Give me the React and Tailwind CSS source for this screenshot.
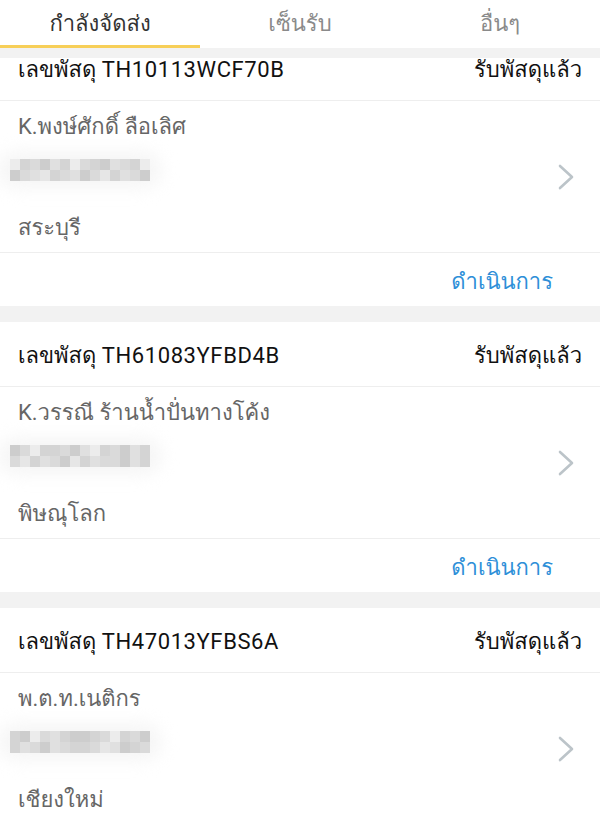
const font = {
  fontFamily: 'Roboto, Loma, Garuda, "Noto Sans Thai Looped", "Noto Sans", "Noto Sans Thai", "Liberation Sans", sans-serif',
};

const parcels = [
  { id: "TH10113WCF70B", name: "K.พงษ์ศักดิ์ ลือเลิศ", city: "สระบุรี", blur: [5, 3, 2, 4, 1, 3, 5, 2, 3, 4, 1, 2, 3, 5] },
  { id: "TH61083YFBD4B", name: "K.วรรณี ร้านน้ำปั่นทางโค้ง", city: "พิษณุโลก", blur: [4, 2, 5, 3, 3, 2, 4, 1, 5, 3, 2, 4, 1, 3] },
  { id: "TH47013YFBS6A", name: "พ.ต.ท.เนติกร", city: "เชียงใหม่", blur: [3, 4, 5, 2, 1, 3, 4, 4, 3, 2, 5, 3, 2, 4] },
];

const shades = ["#ececec", "#e6e6e6", "#e0e0e0", "#dadada", "#d4d4d4", "#cdcdcd"];

const Blurred = ({ seed }) => (
  <div className="relative h-[22px] w-[140px]">
    <div className="absolute -inset-x-3 -inset-y-2 rounded-full bg-[#f6f6f6] blur-sm" />
    <div className="relative grid h-full grid-cols-[repeat(14,10px)] grid-rows-2 blur-[0.5px]">
      {seed.concat(seed.slice().reverse()).map((s, i) => (
        <div key={i} style={{ backgroundColor: shades[(s + (i < 14 ? 1 : 0)) % 6] }} />
      ))}
    </div>
  </div>
);

const Chevron = () => (
  <svg width="18" height="28" viewBox="0 0 18 28" className="mr-[25px]">
    <polyline points="3,3 15,14 3,25" fill="none" stroke="#bcc4c9" strokeWidth="2.6" strokeLinecap="round" strokeLinejoin="round" />
  </svg>
);

const Card = ({ p, first }) => (
  <div className={`bg-white ${first ? "-mt-[22px]" : "mt-4"}`}>
    <div className="flex h-[65px] items-center justify-between border-b border-[#eeeeee] px-[18px] pt-[3px] text-[22px] text-[#111]">
      <span>
        เลขพัสดุ <span className="tracking-[0.6px]">{p.id}</span>
      </span>
      <span>รับพัสดุแล้ว</span>
    </div>
    <div className="flex h-[152px] items-center border-b border-[#eeeeee]">
      <div className="flex h-full flex-1 flex-col pl-[18px] text-[22px] leading-[28px] text-[#666]">
        <span className="mt-[12px]">{p.name}</span>
        <div className="-ml-2 mt-[18px]">
          <Blurred seed={p.blur} />
        </div>
        <span className="mt-[33px]">{p.city}</span>
      </div>
      <Chevron />
    </div>
    <div className="flex h-[53px] items-center justify-end pr-[47px] pt-[4px] text-[22px] text-[#2e8fd8]">ดำเนินการ</div>
  </div>
);

export default function App() {
  return (
    <div className="h-[824px] w-[600px] overflow-hidden bg-[#f2f2f2]" style={font}>
      <div className="flex h-[48px] bg-white">
        {["กำลังจัดส่ง", "เซ็นรับ", "อื่นๆ"].map((t, i) => (
          <div
            key={t}
            className={`flex flex-1 items-center justify-center border-b-[3px] pt-[1px] text-[22px] ${
              i === 0 ? "border-[#f7cf58] text-[#333]" : "border-transparent text-[#8a8a8a]"
            }`}
          >
            {t}
          </div>
        ))}
      </div>
      <div className="h-[10px] bg-[#f2f2f2]" />
      <div className="overflow-hidden">
        {parcels.map((p, i) => (
          <Card key={p.id} p={p} first={i === 0} />
        ))}
      </div>
    </div>
  );
}
